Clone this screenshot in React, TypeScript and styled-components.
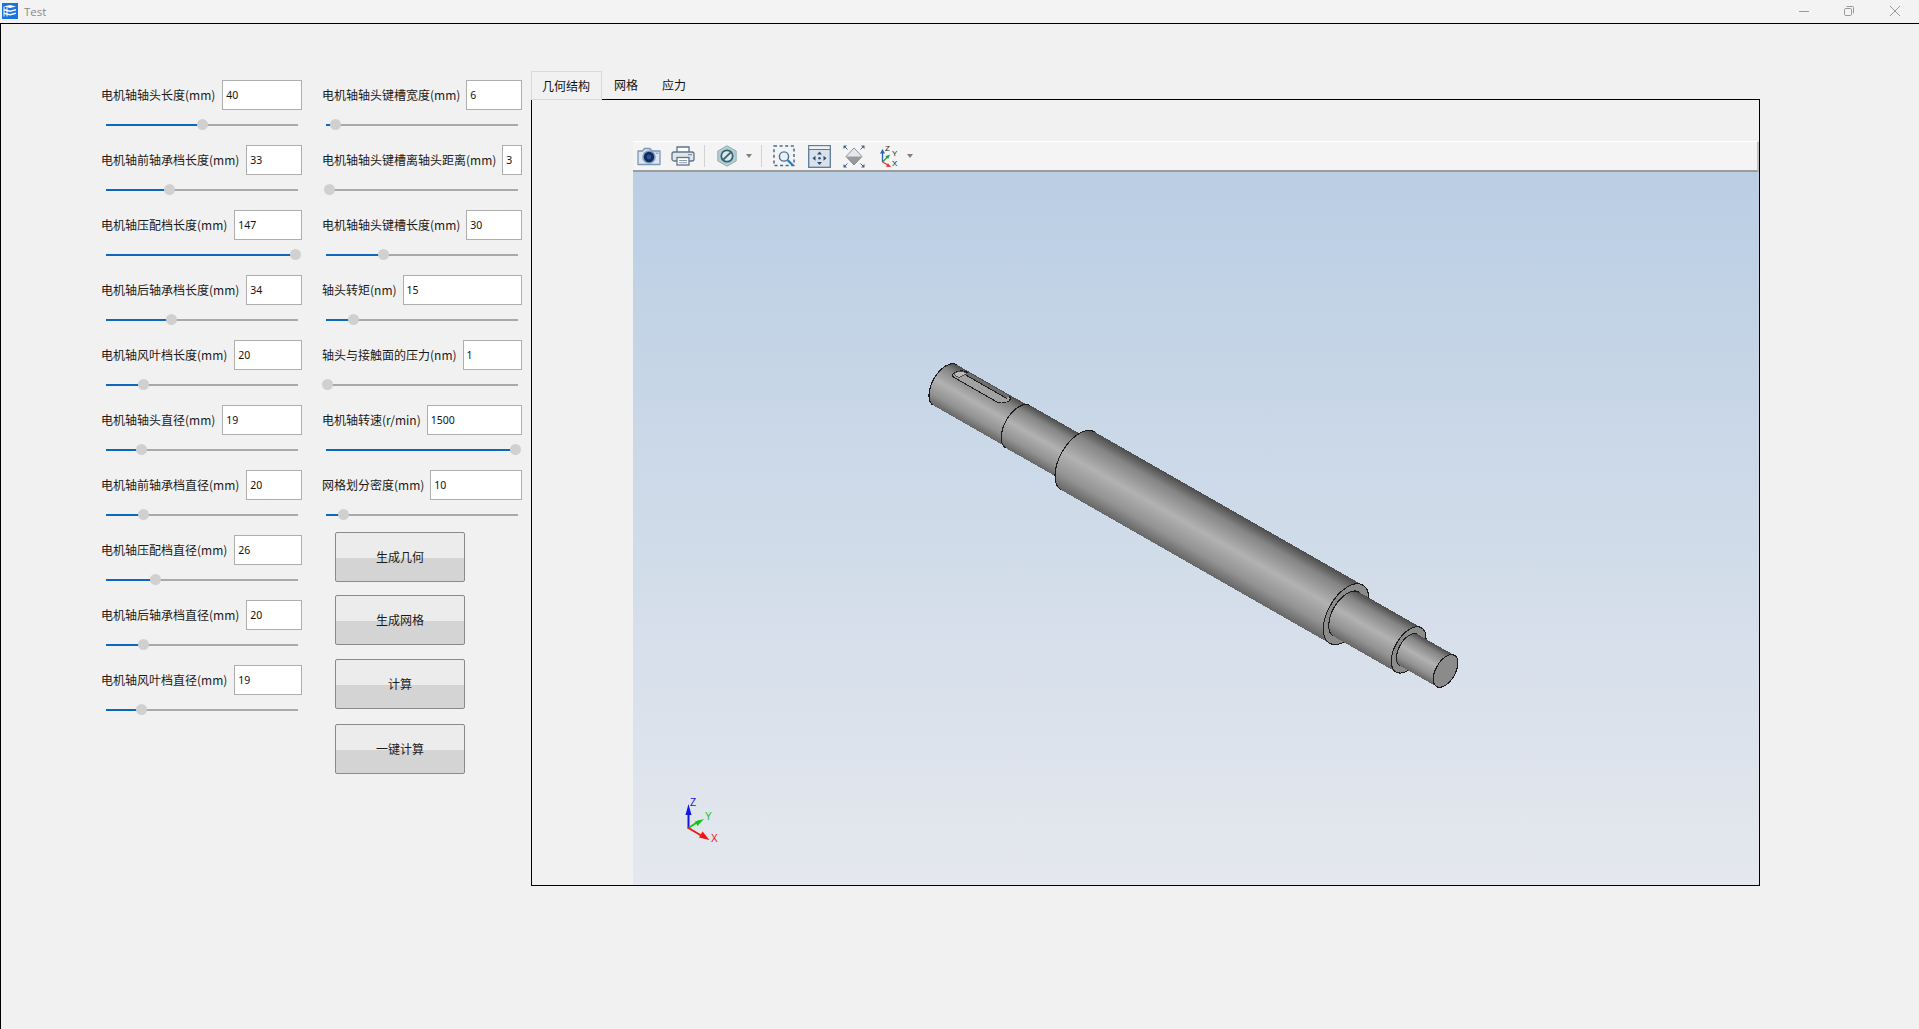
import React from "react";
import styled, { createGlobalStyle } from "styled-components";

const FONT = `"Noto Sans CJK SC", "Noto Sans", sans-serif`;

type Field = { label: string; value: string; thumb: number };

// thumb = centre of the handle, measured from the start of the track
const leftFields: Field[] = [
  { label: "电机轴轴头长度(mm)", value: "40", thumb: 96 },
  { label: "电机轴前轴承档长度(mm)", value: "33", thumb: 63 },
  { label: "电机轴压配档长度(mm)", value: "147", thumb: 189 },
  { label: "电机轴后轴承档长度(mm)", value: "34", thumb: 65 },
  { label: "电机轴风叶档长度(mm)", value: "20", thumb: 37 },
  { label: "电机轴轴头直径(mm)", value: "19", thumb: 35 },
  { label: "电机轴前轴承档直径(mm)", value: "20", thumb: 37 },
  { label: "电机轴压配档直径(mm)", value: "26", thumb: 49 },
  { label: "电机轴后轴承档直径(mm)", value: "20", thumb: 37 },
  { label: "电机轴风叶档直径(mm)", value: "19", thumb: 35 },
];

const rightFields: Field[] = [
  { label: "电机轴轴头键槽宽度(mm)", value: "6", thumb: 9 },
  { label: "电机轴轴头键槽离轴头距离(mm)", value: "3", thumb: 3 },
  { label: "电机轴轴头键槽长度(mm)", value: "30", thumb: 57 },
  { label: "轴头转矩(nm)", value: "15", thumb: 27 },
  { label: "轴头与接触面的压力(nm)", value: "1", thumb: 1 },
  { label: "电机轴转速(r/min)", value: "1500", thumb: 189 },
  { label: "网格划分密度(mm)", value: "10", thumb: 17 },
];

const actions = [
  { text: "生成几何", gap: 0 },
  { text: "生成网格", gap: 13 },
  { text: "计算", gap: 14 },
  { text: "一键计算", gap: 15 },
];
const tabs = ["几何结构", "网格", "应力"];

const FieldRow = ({ field, gap }: { field: Field; gap: number }) => (
  <Row>
    <InputLine $gap={gap}>
      <Label>{field.label}</Label>
      <ValueInput value={field.value} readOnly />
    </InputLine>
    <Slider $left={field.thumb}>
      <Thumb $left={field.thumb} />
    </Slider>
  </Row>
);

const k = 0.54;
const segments = [
  { u0: 0, u1: 84, r: 23.5, face: false },
  { u0: 84, u1: 153, r: 24.5, face: false },
  { u0: 153, u1: 462, r: 33.5, face: true },
  { u0: 462, u1: 534, r: 25.5, face: true },
  { u0: 534, u1: 576.5, r: 18, face: true },
];

const bodyPath = (u0: number, u1: number, r: number) => {
  const rx = r * k;
  return `M${u0} ${-r}L${u1} ${-r}A${rx} ${r} 0 0 1 ${u1} ${r}L${u0} ${r}A${rx} ${r} 0 0 1 ${u0} ${-r}Z`;
};

const leftArc = (u: number, r: number) => `M${u} ${r}A${r * k} ${r} 0 0 1 ${u} ${-r}`;

const Shaft = () => (
  <g transform="translate(945 385) rotate(29.74)" shapeRendering="crispEdges">
    {segments.map((s) => (
      <g key={s.u0}>
        <path d={bodyPath(s.u0, s.u1, s.r)} fill="url(#steel)" />
        <path d={leftArc(s.u0, s.r)} fill="none" stroke="#1c1c1c" strokeWidth="1.1" />
        {s.face && (
          <ellipse cx={s.u1} cy="0" rx={s.r * k} ry={s.r} fill="#8b8b8b" stroke="#1c1c1c" strokeWidth="1.1" />
        )}
      </g>
    ))}
    <g transform="skewX(-35)">
      <rect x="-9" y="-22" width="60" height="11" rx="5.5" fill="#a2a2a2" stroke="#1c1c1c" />
      <path d="M-2 -22.5H46V-19H-2Z" fill="#6e6e6e" />
      <path d="M-1 -19H47" stroke="#1c1c1c" fill="none" />
      <path d="M-8 -16.5C-8 -20 -5 -21 -1 -21V-13.5C-4 -13 -8 -13 -8 -16.5Z" fill="#bcbcbc" stroke="#333" strokeWidth="0.7" />
    </g>
  </g>
);

const Triad = () => (
  <g strokeLinecap="round" fontFamily={`"Liberation Sans", sans-serif`} fontSize="10">
    <path d="M688.5 828V810" stroke="#1414e6" strokeWidth="2" />
    <path d="M688.5 804L691.5 815H685.5Z" fill="#1414e6" />
    <path d="M688.5 828L699 821" stroke="#12c412" strokeWidth="1.6" />
    <path d="M704 819L695 821.5L697.5 826Z" fill="#12c412" />
    <path d="M688.5 828L702 836" stroke="#f01414" strokeWidth="1.8" />
    <path d="M709.5 840L699 837.5L702.5 831.5Z" fill="#f01414" />
    <text x="690" y="806" fill="#1414e6">Z</text>
    <text x="705" y="820" fill="#12c412">Y</text>
    <text x="711" y="842" fill="#f01414">X</text>
  </g>
);

const CameraIcon = () => (
  <svg width="24" height="20" viewBox="0 0 24 20">
    <path d="M1 5H5.5L7.5 2.5H13L15 5H23V18.5H1Z" fill="#dde7f2" stroke="#7c97b4" strokeWidth="1.3" strokeLinejoin="round" />
    <circle cx="12" cy="11" r="6.8" fill="#86a1c1" />
    <circle cx="12" cy="11" r="5.2" fill="#14295f" />
    <circle cx="12" cy="11" r="2.4" fill="#2f4f96" />
    <rect x="18.8" y="6.6" width="2.6" height="1.4" fill="#8ca6c4" />
  </svg>
);

const PrinterIcon = () => (
  <svg width="24" height="20" viewBox="0 0 24 20">
    <path d="M6 6V1H18V6" fill="#fff" stroke="#5f7488" strokeWidth="1.3" />
    <rect x="1" y="6" width="22" height="9" rx="2" fill="#dfe5ec" stroke="#5f7488" strokeWidth="1.3" />
    <rect x="17" y="8" width="4" height="1.2" fill="#7e8fa0" />
    <rect x="6" y="11.5" width="12" height="7.5" fill="#fff" stroke="#5f7488" strokeWidth="1.3" />
    <path d="M8 14.5H16M8 16.7H16" stroke="#8a9aa9" />
  </svg>
);

const HexIcon = () => (
  <svg width="20" height="22" viewBox="0 0 20 22">
    <path d="M10 .8L19.2 6V16L10 21.2L.8 16V6Z" fill="#b7ccd2" stroke="#8fb0b7" />
    <circle cx="10" cy="11" r="5.7" fill="#dfe9ec" stroke="#2f6470" strokeWidth="1.7" />
    <path d="M6.3 14.7L13.7 7.3" stroke="#2f6470" strokeWidth="1.8" />
  </svg>
);

const ZoomBoxIcon = () => (
  <svg width="22" height="22" viewBox="0 0 22 22">
    <rect x="1" y="1" width="20" height="19.5" fill="none" stroke="#4b6790" strokeWidth="1.5" strokeDasharray="3 2.6" />
    <circle cx="11" cy="11.5" r="4.6" fill="#e9f1f8" stroke="#4c6f94" strokeWidth="1.4" />
    <path d="M14.5 15L20 20.5" stroke="#2c7fc0" strokeWidth="2.4" />
  </svg>
);

const FitIcon = () => (
  <svg width="23" height="23" viewBox="0 0 23 23">
    <rect x=".7" y=".7" width="21.6" height="21.6" fill="#d9e2ec" stroke="#5e7895" strokeWidth="1.3" />
    <path d="M1 4.5H22" stroke="#5e7895" />
    <rect x="1.4" y="1.4" width="20" height="2.6" fill="#eef2f6" />
    <g fill="#2f4a70">
      <path d="M11.5 6.5L14 9.5H9Z" />
      <path d="M11.5 20L14 17H9Z" />
      <path d="M4.5 13.2L7.5 10.7V15.7Z" />
      <path d="M18.5 13.2L15.5 10.7V15.7Z" />
      <circle cx="11.5" cy="13.2" r="1.2" />
    </g>
  </svg>
);

const DiamondIcon = () => (
  <svg width="22" height="23" viewBox="0 0 22 23">
    <path d="M11 3L19 11.5H3Z" fill="#e6e8eb" />
    <path d="M3 11.5H19L11 20Z" fill="#979ba0" />
    <path d="M11 3L19 11.5L11 20L3 11.5Z" fill="none" stroke="#777c82" strokeWidth=".8" />
    <g fill="#45628a">
      <path d="M.5 .5H4L.5 4Z" />
      <path d="M21.5 .5H18L21.5 4Z" />
      <path d="M.5 22.5H4L.5 19Z" />
      <path d="M21.5 22.5H18L21.5 19Z" />
    </g>
    <path d="M2 2L4.5 4.5M20 2L17.5 4.5M2 21L4.5 18.5M20 21L17.5 18.5" stroke="#45628a" strokeWidth="1" />
  </svg>
);

const AxisIcon = () => (
  <svg width="20" height="24" viewBox="0 0 20 24" fontFamily={`"Liberation Sans", sans-serif`} fontSize="8" fill="#222">
    <path d="M3.5 18V8" stroke="#2b62b8" strokeWidth="1.3" />
    <path d="M3.5 5L6 9.5H1Z" fill="#2b62b8" />
    <path d="M3.5 18L8.5 13" stroke="#2b9c4a" strokeWidth="1.3" />
    <path d="M11 10.5L6.3 12.2L9.2 15Z" fill="#2b9c4a" />
    <path d="M3.5 18L9 21" stroke="#e5322d" strokeWidth="1.3" />
    <path d="M12 23L7 22.8L9 19.2Z" fill="#e5322d" />
    <text x="6" y="7">Z</text>
    <text x="13" y="12">Y</text>
    <text x="13" y="22">X</text>
  </svg>
);

const AppIcon = () => (
  <svg width="16" height="16" viewBox="0 0 16 16">
    <rect width="16" height="16" fill="#1a73e3" />
    <path d="M2 3.5L8 2L14 3.5L8 5Z" fill="#fff" />
    <path d="M2 6L8 7.5L14 6V7.5L8 9L2 7.5Z" fill="#fff" />
    <path d="M2 9.5L8 11L14 9.5V11L8 12.5L2 11Z" fill="#fff" />
    <path d="M2 3.5V13.5M5 4.5V13.5" stroke="#fff" strokeWidth="1" />
  </svg>
);

const App = () => {
  return (
    <>
      <GlobalStyle />
      <Shell>
        <TitleBar>
          <AppIcon />
          <TitleText>Test</TitleText>
          <WindowControls>
            <svg width="10" height="10" viewBox="0 0 10 10">
              <path d="M0 5.5H10" stroke="#999" />
            </svg>
            <svg width="10" height="10" viewBox="0 0 10 10">
              <rect x=".5" y="2.5" width="7" height="7" rx="1.2" fill="none" stroke="#999" />
              <path d="M2.5 .5H8.5Q9.5 .5 9.5 1.5V7.5" fill="none" stroke="#999" />
            </svg>
            <svg width="10" height="10" viewBox="0 0 10 10">
              <path d="M0 0L10 10M10 0L0 10" stroke="#999" />
            </svg>
          </WindowControls>
        </TitleBar>
        <Main>
          <FormColumn $width={201} $after={20}>
            {leftFields.map((f) => (
              <FieldRow key={f.label} field={f} gap={7} />
            ))}
          </FormColumn>
          <FormColumn $width={200} $after={9}>
            {rightFields.map((f) => (
              <FieldRow key={f.label} field={f} gap={6} />
            ))}
            <ButtonStack>
              {actions.map((a) => (
                <ActionButton key={a.text} $gap={a.gap}>
                  {a.text}
                </ActionButton>
              ))}
            </ButtonStack>
          </FormColumn>
          <TabWidget>
            <TabBar>
              {tabs.map((t, i) => (
                <Tab key={t} $active={i === 0}>
                  {t}
                </Tab>
              ))}
            </TabBar>
            <TabPane>
              <Toolbar>
                <ToolSlot $gap={4}><CameraIcon /></ToolSlot>
                <ToolSlot $gap={10}><PrinterIcon /></ToolSlot>
                <ToolSep $gap={9} />
                <ToolSlot $gap={12}><HexIcon /></ToolSlot>
                <Caret $gap={9} />
                <ToolSep $gap={9} />
                <ToolSlot $gap={11}><ZoomBoxIcon /></ToolSlot>
                <ToolSlot $gap={13}><FitIcon /></ToolSlot>
                <ToolSlot $gap={12}><DiamondIcon /></ToolSlot>
                <ToolSlot $gap={14}><AxisIcon /></ToolSlot>
                <Caret $gap={8} />
              </Toolbar>
              <Viewport>
                <ViewSvg viewBox="633 172 1126 713">
                  <defs>
                    <linearGradient id="steel" x1="0" y1="0" x2="0" y2="1">
                      <stop offset="0" stopColor="#4c4c4c" />
                      <stop offset="0.18" stopColor="#858585" />
                      <stop offset="0.5" stopColor="#b2b2b2" />
                      <stop offset="0.8" stopColor="#929292" />
                      <stop offset="1" stopColor="#666666" />
                    </linearGradient>
                  </defs>
                  <Shaft />
                  <Triad />
                </ViewSvg>
              </Viewport>
            </TabPane>
          </TabWidget>
        </Main>
      </Shell>
    </>
  );
};

const GlobalStyle = createGlobalStyle`
  html, body {
    margin: 0;
    padding: 0;
    background: #f1f1f1;
    overflow: hidden;
  }
  * {
    box-sizing: border-box;
  }
`;
const Shell = styled.div`
  width: 1919px;
  height: 1029px;
  display: flex;
  flex-direction: column;
  font-family: ${FONT};
  font-size: 12px;
  color: #1a1a1a;
`;
const TitleBar = styled.div`
  height: 24px;
  flex: none;
  display: flex;
  align-items: center;
  padding: 0 19px 1px 2px;
  background: #f3f3f3;
  border-bottom: 1px solid #000;
`;
const TitleText = styled.span`
  margin-left: 6px;
  font-family: "Open Sans", sans-serif;
  font-size: 11.5px;
  color: #8a8a8a;
`;
const WindowControls = styled.div`
  margin-left: auto;
  display: flex;
  gap: 35px;
  align-items: center;
  & > svg:last-child {
    margin-left: 1px;
  }
`;
const Main = styled.div`
  flex: 1;
  display: flex;
  align-items: flex-start;
  padding: 47px 0 0 100px;
  border-left: 1px solid #000;
  background: #f1f1f1;
`;
const FormColumn = styled.div<{ $width: number; $after: number }>`
  width: ${(p) => p.$width}px;
  flex: none;
  margin-right: ${(p) => p.$after}px;
  padding-top: 9px;
`;
const Row = styled.div`
  height: 65px;
`;
const InputLine = styled.div<{ $gap: number }>`
  display: flex;
  align-items: center;
  gap: ${(p) => p.$gap}px;
  height: 30px;
`;
const Label = styled.span`
  flex: none;
  white-space: nowrap;
  line-height: 30px;
`;
const ValueInput = styled.input`
  flex: 1;
  min-width: 0;
  width: 0;
  height: 30px;
  padding: 0 3px;
  border: 1px solid #aeaeae;
  border-radius: 0;
  outline: none;
  background: #fff;
  color: #111;
  font-family: "Noto Sans", sans-serif;
  font-size: 10.5px;
`;
const Slider = styled.div<{ $left: number }>`
  position: relative;
  width: 192px;
  height: 2px;
  margin: 14px 4px 0 auto;
  background: linear-gradient(
    to right,
    #0f67b9 ${(p) => p.$left}px,
    #a9a9a9 ${(p) => p.$left}px
  );
`;
const Thumb = styled.span<{ $left: number }>`
  position: absolute;
  top: -5px;
  left: ${(p) => p.$left - 5.5}px;
  width: 11px;
  height: 11px;
  border-radius: 50%;
  background: #d0d0d0;
`;
const ButtonStack = styled.div`
  display: flex;
  flex-direction: column;
  margin: -3px 0 0 13px;
  width: 130px;
`;
const ActionButton = styled.button<{ $gap: number }>`
  height: 50px;
  flex: none;
  margin-top: ${(p) => p.$gap}px;
  padding: 0 0 2px;
  border: 1px solid #8a8a8a;
  border-radius: 2px;
  background: linear-gradient(to bottom, #ececec 0, #ececec 25px, #d4d4d4 25px, #d4d4d4 100%);
  color: #1a1a1a;
  font-family: ${FONT};
  font-size: 12px;
`;
const TabWidget = styled.div`
  width: 1229px;
  flex: none;
  display: flex;
  flex-direction: column;
`;
const TabBar = styled.div`
  display: flex;
  height: 29px;
  position: relative;
  z-index: 1;
  margin-bottom: -1px;
`;
const Tab = styled.div<{ $active: boolean }>`
  height: 29px;
  line-height: 28px;
  padding: 0 ${(p) => (p.$active ? "11px 0 10px" : "12px")};
  background: ${(p) => (p.$active ? "#f1f1f1" : "transparent")};
  border: ${(p) => (p.$active ? "1px solid #d9d9d9" : "0")};
  color: #111;
`;
const TabPane = styled.div`
  height: 787px;
  display: flex;
  flex-direction: column;
  padding: 41px 0 0 101px;
  border: 1px solid #000;
`;
const Toolbar = styled.div`
  height: 31px;
  flex: none;
  display: flex;
  align-items: center;
  background: #f4f4f4;
  border-top: 1px solid #fff;
  border-bottom: 2px solid #9c9c9c;
  border-right: 2px solid #c4c4c4;
`;
const ToolSlot = styled.span<{ $gap: number }>`
  display: flex;
  margin-left: ${(p) => p.$gap}px;
`;
const ToolSep = styled.span<{ $gap: number }>`
  width: 1px;
  height: 22px;
  margin-left: ${(p) => p.$gap}px;
  background: #d2d2d2;
`;
const Caret = styled.span<{ $gap: number }>`
  width: 0;
  height: 0;
  margin-left: ${(p) => p.$gap}px;
  border-left: 3.5px solid transparent;
  border-right: 3.5px solid transparent;
  border-top: 4px solid #808080;
`;
const Viewport = styled.div`
  flex: 1;
  min-height: 0;
  background: linear-gradient(to bottom, #bacee4, #e5e8ee);
`;
const ViewSvg = styled.svg`
  display: block;
  width: 100%;
  height: 100%;
`;

export default App;
